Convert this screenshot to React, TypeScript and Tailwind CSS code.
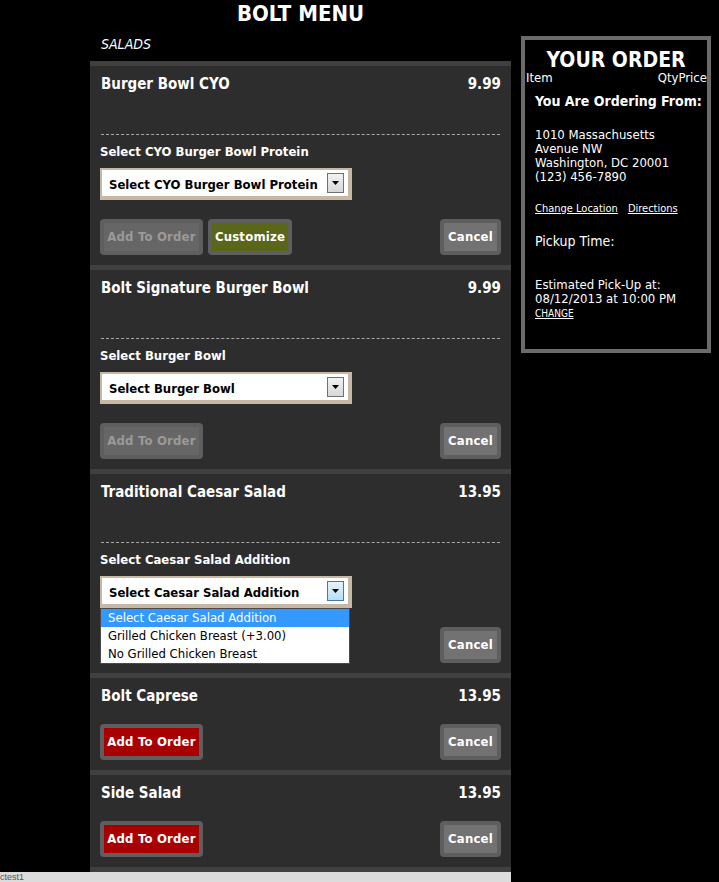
import React from "react";

const sans = "font-['DejaVu_Sans_Condensed','DejaVu_Sans',sans-serif]";
const btnFont = "font-['Liberation_Sans_Narrow','DejaVu_Sans_Condensed',sans-serif]";

type BtnKind = "red" | "olive" | "gray" | "disabled";

const innerStyles: Record<BtnKind, string> = {
  red: "bg-[#a80000] text-white",
  olive: "bg-[#5a6619] text-white",
  gray: "bg-[#727272] text-white",
  disabled: "bg-[#666666] text-[#9a9a9a]",
};

function Btn({ label, kind, width, hidden }: { label: string; kind: BtnKind; width: string; hidden?: boolean }) {
  return (
    <div className={`h-[36px] ${width} rounded-[4px] bg-[#5e5e5e] p-[4px]`}>
      <div
        className={`h-full flex items-center justify-center ${btnFont} font-bold text-[13px] tracking-[0.2px] ${innerStyles[kind]}`}
      >
        <span className={hidden ? "invisible" : ""}>{label}</span>
      </div>
    </div>
  );
}

function SelectBox({ text, focused }: { text: string; focused?: boolean }) {
  return (
    <div className="w-[252px] h-[32px] bg-white border-t-[2px] border-l-[2px] border-r-[4px] border-b-[4px] border-[#c7b7a5] flex items-center pl-[7px] pr-[4px]">
      <span className={`flex-1 mt-[3px] text-[13px] font-bold text-black ${sans}`}>{text}</span>
      <div
        className={`w-[17px] h-[20px] border flex items-center justify-center ${
          focused ? "border-[#3d7bad] bg-[linear-gradient(#e5f4fc,#b6dff6)]" : "border-[#707070] bg-[linear-gradient(#f2f2f2,#d8d8d8)]"
        }`}
      >
        <svg width="7" height="4" viewBox="0 0 7 4">
          <path d="M0 0h7L3.5 4z" fill="#000" />
        </svg>
      </div>
    </div>
  );
}

interface ItemProps {
  name: string;
  price: string;
  label?: string;
  selectText?: string;
  customize?: boolean;
  enabled?: boolean;
  open?: string[];
}

function MenuItem({ name, price, label, selectText, customize, enabled, open }: ItemProps) {
  return (
    <div className="border-t-[5px] border-[#404040] bg-[#2d2d2d] px-[10px] pt-[9px] pb-[10px]">
      <div className={`h-[18px] flex items-center justify-between pl-[1px] text-white font-bold text-[15px] ${sans}`}>
        <span>{name}</span>
        <span>{price}</span>
      </div>
      {label && (
        <>
          <div className="mt-[41px] mx-[1px] border-t border-dashed border-[#a8a8a8]" />
          <div className={`mt-[9px] h-[16px] flex items-center text-white font-bold text-[13px] ${sans}`}>{label}</div>
          <div className="mt-[8px] relative">
            <SelectBox text={selectText ?? ""} focused={!!open} />
            {open && (
              <div className="absolute left-0 top-[32px] w-[250px] bg-white border border-[#4a4a4a] z-10">
                {open.map((o, i) => (
                  <div
                    key={o}
                    className={`h-[18px] pl-[7px] flex items-center text-[13px] ${sans} ${
                      i === 0 ? "bg-[#3399ff] text-white" : "text-black"
                    }`}
                  >
                    {o}
                  </div>
                ))}
              </div>
            )}
          </div>
        </>
      )}
      <div className="mt-[19px] flex items-center">
        <Btn label="Add To Order" kind={enabled ? "red" : "disabled"} width="w-[103px]" hidden={!!open} />
        {customize && (
          <div className="ml-[5px]">
            <Btn label="Customize" kind="olive" width="w-[84px]" />
          </div>
        )}
        <div className="ml-auto">
          <Btn label="Cancel" kind="gray" width="w-[61px]" />
        </div>
      </div>
    </div>
  );
}

export default function App() {
  return (
    <div className={`min-h-[882px] bg-black ${sans}`}>
      <div className="flex items-start">
        <div className="ml-[90px] w-[421px]">
          <div className="h-[26px] flex items-center justify-center text-white font-bold text-[22px]">BOLT MENU</div>
          <div className="h-[35px] pl-[11px] pt-[10px] text-white italic text-[14px] leading-[17px]">SALADS</div>
          <MenuItem
            name="Burger Bowl CYO"
            price="9.99"
            label="Select CYO Burger Bowl Protein"
            selectText="Select CYO Burger Bowl Protein"
            customize
          />
          <MenuItem
            name="Bolt Signature Burger Bowl"
            price="9.99"
            label="Select Burger Bowl"
            selectText="Select Burger Bowl"
          />
          <MenuItem
            name="Traditional Caesar Salad"
            price="13.95"
            label="Select Caesar Salad Addition"
            selectText="Select Caesar Salad Addition"
            open={["Select Caesar Salad Addition", "Grilled Chicken Breast (+3.00)", "No Grilled Chicken Breast"]}
          />
          <MenuItem name="Bolt Caprese" price="13.95" enabled />
          <MenuItem name="Side Salad" price="13.95" enabled />
          <div className="h-[20px] border-t-[5px] border-[#404040] bg-[#2d2d2d]" />
        </div>

        <div className="ml-[10px] mt-[36px] w-[190px] h-[317px] border-[4px] border-[#6b6b6b] bg-black text-white">
          <div className="mt-[10px] h-[22px] flex items-center justify-center font-bold text-[21px]">YOUR ORDER</div>
          <div className="-mt-[1px] h-[14px] flex items-center justify-between pl-[1px] text-[13px]">
            <span>Item</span>
            <span>QtyPrice</span>
          </div>
          <div className="pl-[10px]">
            <div className="mt-[8px] h-[16px] flex items-center font-bold text-[14px]">You Are Ordering From:</div>
            <div className="mt-[19px] text-[13px] leading-[14px]">
              <div>1010 Massachusetts</div>
              <div>Avenue NW</div>
              <div>Washington, DC 20001</div>
              <div>(123) 456-7890</div>
            </div>
            <div className="mt-[18px] h-[14px] flex items-center gap-[10px] text-[11px] underline">
              <span>Change Location</span>
              <span>Directions</span>
            </div>
            <div className="mt-[16px] h-[18px] flex items-center text-[14px]">Pickup Time:</div>
            <div className="mt-[28px] text-[13px] leading-[14px]">
              <div>Estimated Pick-Up at:</div>
              <div>08/12/2013 at 10:00 PM</div>
            </div>
            <div className="mt-[2px] text-[10px] leading-[12px] underline">CHANGE</div>
          </div>
        </div>
      </div>

      <div className="fixed left-0 bottom-0 w-[511px] h-[10px] bg-[#dcdcdc] overflow-hidden">
        <span className="block text-[9px] leading-[10px] text-[#555] font-['Liberation_Sans',sans-serif]">
          ctest1
        </span>
      </div>
    </div>
  );
}
